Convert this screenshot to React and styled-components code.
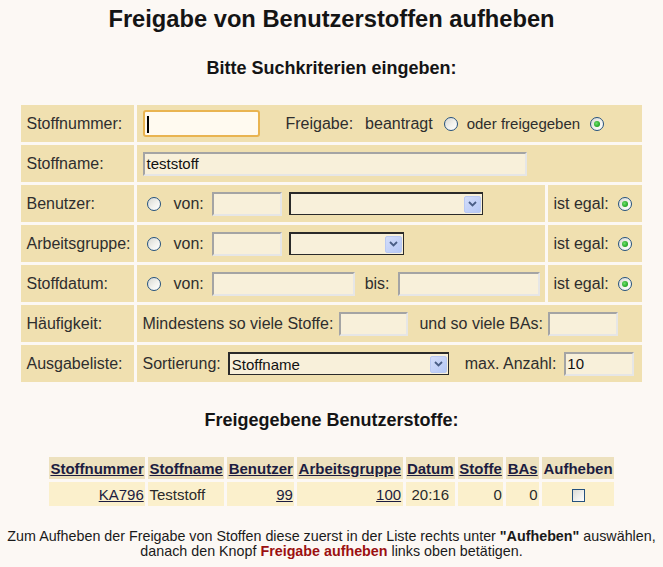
import React from 'react';
import styled, { createGlobalStyle, css } from 'styled-components';

const GlobalStyle = createGlobalStyle`
    html, body {
        margin: 0;
        padding: 0;
        background: #fcf8f4;
    }
    body {
        font-family: "Liberation Sans", Arial, sans-serif;
        color: #222;
    }
`;

const Page = styled.div`
    width: 663px;
    min-height: 567px;
    padding-top: 5px;
    box-sizing: border-box;
    display: flex;
    flex-direction: column;
    align-items: center;
`;

const Title = styled.h1`
    margin: 0;
    font-size: 23.7px;
    line-height: 28px;
    font-weight: bold;
    color: #141414;
`;

const SubTitle = styled.h3`
    margin: ${(p) => p.$mt || 24}px 0 0;
    font-size: 18px;
    line-height: 22px;
    font-weight: bold;
    color: #141414;
`;

const SearchTable = styled.table`
    margin-top: 23px;
    border-collapse: separate;
    border-spacing: 3px;
    width: 626px;
    table-layout: fixed;
`;

const Col = styled.col`
    width: ${(p) => p.$w}px;
`;

const Cell = styled.td`
    background: #f0e0b0;
    height: 37px;
    padding: 0 5px;
    font-size: 16px;
    color: #2e2e2e;
    white-space: nowrap;
    vertical-align: middle;
`;

const Line = styled.div`
    display: flex;
    align-items: center;
`;

const Text = styled.span`
    margin-left: ${(p) => p.$ml || 0}px;
    font-size: ${(p) => p.$size || 16}px;
    line-height: 18px;
`;

const TextInput = styled.div`
    margin-left: ${(p) => p.$ml || 0}px;
    width: ${(p) => p.$w}px;
    height: 24px;
    box-sizing: border-box;
    background: #f8f0da;
    border: 2px solid;
    border-color: #a4a4a4 #e6e6e6 #e6e6e6 #a4a4a4;
    font-size: 15px;
    line-height: 20px;
    padding-left: 1px;
    color: #111;
    ${(p) =>
        p.$focus &&
        css`
            height: 27px;
            background: #fffaf0;
            border: 2px solid #e9b451;
            border-radius: 3px;
            padding-left: 2px;
            line-height: 22px;
        `}
`;

const Caret = styled.span`
    display: inline-block;
    width: 2px;
    height: 17px;
    background: #000;
    vertical-align: middle;
`;

const SelectBox = styled.div`
    margin-left: ${(p) => p.$ml || 0}px;
    width: ${(p) => p.$w}px;
    height: 23px;
    box-sizing: border-box;
    border: 1px solid #2a2a2a;
    border-top-width: 2px;
    border-left-width: 2px;
    background: #f8f0da;
    display: flex;
    align-items: center;
    justify-content: space-between;
    font-size: 15px;
    color: #111;
    padding-left: 2px;
`;

const ArrowBox = styled.span`
    width: 17px;
    height: 17px;
    margin-right: 1px;
    box-sizing: border-box;
    border: 1px solid #b9c9f3;
    border-radius: 2px;
    background: linear-gradient(135deg, #d3ddfa 0%, #b6c8f5 100%);
    display: flex;
    align-items: center;
    justify-content: center;
`;

const Radio = styled.span`
    position: relative;
    display: inline-block;
    flex: none;
    margin-left: ${(p) => p.$ml || 0}px;
    width: 14px;
    height: 14px;
    box-sizing: border-box;
    border-radius: 50%;
    border: 1px solid #24517e;
    background: linear-gradient(135deg, #d8d8d2 0%, #f2f2ee 55%, #ffffff 100%);
    ${(p) =>
        p.$checked &&
        css`
            &::after {
                content: '';
                position: absolute;
                left: 3px;
                top: 3px;
                width: 6px;
                height: 6px;
                border-radius: 50%;
                background: radial-gradient(circle at 40% 40%, #6ce06c 0%, #22a322 70%);
            }
        `}
`;

const ResultTable = styled.table`
    margin-top: 23px;
    border-collapse: separate;
    border-spacing: 3px;
`;

const Head = styled.th`
    background: #ede1be;
    height: 22px;
    padding: 0 1.4px;
    font-size: 15px;
    font-weight: bold;
    color: #1c1c40;
    text-decoration: ${(p) => (p.$plain ? 'none' : 'underline')};
    white-space: nowrap;
`;

const Data = styled.td`
    background: #fbf0cc;
    height: 24px;
    padding: 0 1.4px;
    font-size: 15px;
    color: #2a2a2a;
    text-align: ${(p) => p.$align || 'left'};
    white-space: nowrap;
`;

const DataLink = styled.span`
    color: #1c1c40;
    text-decoration: underline;
`;

const CheckBox = styled.span`
    display: inline-block;
    width: 13px;
    height: 13px;
    box-sizing: border-box;
    border: 1px solid #24517e;
    background: linear-gradient(135deg, #dcdcd6 0%, #ffffff 100%);
    vertical-align: middle;
`;

const Footer = styled.p`
    margin: 20px 0 0;
    font-size: 14.3px;
    line-height: 15px;
    text-align: center;
    color: #1a1a1a;
    white-space: nowrap;
`;

const Strong = styled.b`
    color: ${(p) => p.$color || '#1a1a1a'};
`;

const Chevron = () => (
    <svg width="9" height="6" viewBox="0 0 9 6">
        <path d="M1 1 L4.5 4.5 L8 1" fill="none" stroke="#4a5e86" strokeWidth="1.8" />
    </svg>
);

const Select = ({ w, ml, children }) => (
    <SelectBox $w={w} $ml={ml}>
        <span>{children}</span>
        <ArrowBox>
            <Chevron />
        </ArrowBox>
    </SelectBox>
);

const EgalCell = () => (
    <Cell>
        <Line>
            <Text>ist egal:</Text>
            <Radio $ml={9} $checked />
        </Line>
    </Cell>
);

const results = [
    { nr: 'KA796', name: 'Teststoff', user: '99', group: '100', date: '20:16', stoffe: '0', bas: '0' },
];

const App = () => (
    <>
        <GlobalStyle />
        <Page>
            <Title>Freigabe von Benutzerstoffen aufheben</Title>
            <SubTitle>Bitte Suchkriterien eingeben:</SubTitle>

            <SearchTable>
                <colgroup>
                    <Col $w={113} />
                    <Col $w={408} />
                    <Col $w={93} />
                </colgroup>
                <tbody>
                    <tr>
                        <Cell>Stoffnummer:</Cell>
                        <Cell colSpan={2}>
                            <Line>
                                <TextInput $w={117} $ml={1} $focus>
                                    <Caret />
                                </TextInput>
                                <Text $ml={25}>Freigabe:</Text>
                                <Text $ml={12}>beantragt</Text>
                                <Radio $ml={11} />
                                <Text $ml={9} $size={15}>oder freigegeben</Text>
                                <Radio $ml={10} $checked />
                            </Line>
                        </Cell>
                    </tr>
                    <tr>
                        <Cell>Stoffname:</Cell>
                        <Cell colSpan={2}>
                            <Line>
                                <TextInput $w={384} $ml={1}>teststoff</TextInput>
                            </Line>
                        </Cell>
                    </tr>
                    <tr>
                        <Cell>Benutzer:</Cell>
                        <Cell>
                            <Line>
                                <Radio $ml={5} />
                                <Text $ml={12}>von:</Text>
                                <TextInput $w={70} $ml={8} />
                                <Select w={194} ml={7} />
                            </Line>
                        </Cell>
                        <EgalCell />
                    </tr>
                    <tr>
                        <Cell>Arbeitsgruppe:</Cell>
                        <Cell>
                            <Line>
                                <Radio $ml={5} />
                                <Text $ml={12}>von:</Text>
                                <TextInput $w={70} $ml={8} />
                                <Select w={115} ml={7} />
                            </Line>
                        </Cell>
                        <EgalCell />
                    </tr>
                    <tr>
                        <Cell>Stoffdatum:</Cell>
                        <Cell>
                            <Line>
                                <Radio $ml={5} />
                                <Text $ml={12}>von:</Text>
                                <TextInput $w={143} $ml={8} />
                                <Text $ml={10}>bis:</Text>
                                <TextInput $w={143} $ml={8} />
                            </Line>
                        </Cell>
                        <EgalCell />
                    </tr>
                    <tr>
                        <Cell>Häufigkeit:</Cell>
                        <Cell colSpan={2}>
                            <Line>
                                <Text>Mindestens so viele Stoffe:</Text>
                                <TextInput $w={69} $ml={6} />
                                <Text $ml={11}>und so viele BAs:</Text>
                                <TextInput $w={70} $ml={5} />
                            </Line>
                        </Cell>
                    </tr>
                    <tr>
                        <Cell>Ausgabeliste:</Cell>
                        <Cell colSpan={2}>
                            <Line>
                                <Text>Sortierung:</Text>
                                <Select w={221} ml={7}>
                                    Stoffname
                                </Select>
                                <Text $ml={16}>max. Anzahl:</Text>
                                <TextInput $w={70} $ml={8}>
                                    10
                                </TextInput>
                            </Line>
                        </Cell>
                    </tr>
                </tbody>
            </SearchTable>

            <SubTitle $mt={24}>Freigegebene Benutzerstoffe:</SubTitle>

            <ResultTable>
                <thead>
                    <tr>
                        <Head>Stoffnummer</Head>
                        <Head>Stoffname</Head>
                        <Head>Benutzer</Head>
                        <Head>Arbeitsgruppe</Head>
                        <Head>Datum</Head>
                        <Head>Stoffe</Head>
                        <Head>BAs</Head>
                        <Head $plain>Aufheben</Head>
                    </tr>
                </thead>
                <tbody>
                    {results.map((r) => (
                        <tr key={r.nr}>
                            <Data $align="right">
                                <DataLink>{r.nr}</DataLink>
                            </Data>
                            <Data>{r.name}</Data>
                            <Data $align="right">
                                <DataLink>{r.user}</DataLink>
                            </Data>
                            <Data $align="right">
                                <DataLink>{r.group}</DataLink>
                            </Data>
                            <Data $align="center">{r.date}</Data>
                            <Data $align="right">{r.stoffe}</Data>
                            <Data $align="right">{r.bas}</Data>
                            <Data $align="center">
                                <CheckBox />
                            </Data>
                        </tr>
                    ))}
                </tbody>
            </ResultTable>

            <Footer>
                Zum Aufheben der Freigabe von Stoffen diese zuerst in der Liste rechts unter{' '}
                <Strong>"Aufheben"</Strong> auswählen,
                <br />
                danach den Knopf <Strong $color="#9b1010">Freigabe aufheben</Strong> links oben betätigen.
            </Footer>
        </Page>
    </>
);

export default App;
